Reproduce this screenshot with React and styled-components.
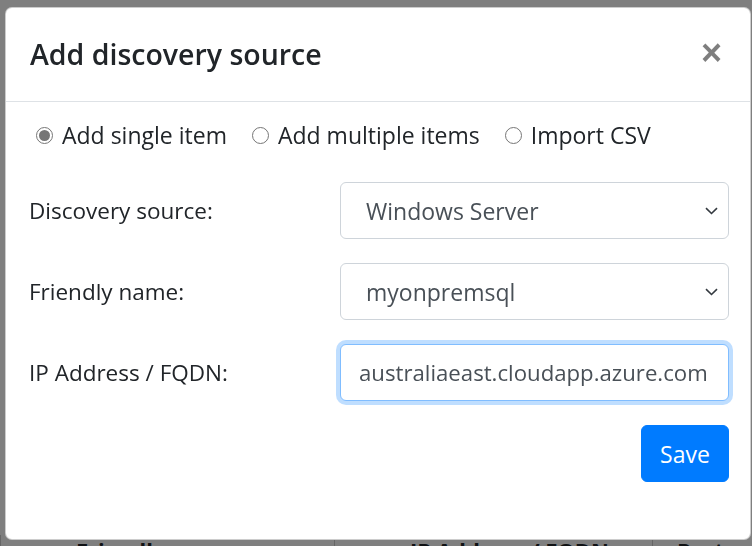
import React, { useState } from 'react';
import styled, { createGlobalStyle } from 'styled-components';

const GlobalStyle = createGlobalStyle`
  html, body {
    margin: 0;
    padding: 0;
    width: 752px;
    height: 546px;
    overflow: hidden;
  }
  body {
    font-family: 'Open Sans', 'Noto Sans', sans-serif;
    color: #212529;
    background: #fff;
  }
`;

export default function App() {
  const [mode, setMode] = useState('single');
  const [source, setSource] = useState('Windows Server');
  const [name, setName] = useState('myonpremsql');
  const [address, setAddress] = useState('australiaeast.cloudapp.azure.com');

  return (
    <Page>
      <GlobalStyle />
      <BgTable>
        <BgCell $w={334}>Friendly name</BgCell>
        <BgCell $w={318}>IP Address / FQDN</BgCell>
        <BgCell $w={100}>Port</BgCell>
      </BgTable>

      <Backdrop>
        <Modal>
          <Header>
            <Title>Add discovery source</Title>
            <CloseButton type='button' aria-label='Close'>
              ×
            </CloseButton>
          </Header>

          <Body>
            <RadioRow>
              <RadioOption>
                <Radio
                  type='radio'
                  name='mode'
                  checked={mode === 'single'}
                  onChange={() => setMode('single')}
                />
                Add single item
              </RadioOption>
              <RadioOption>
                <Radio
                  type='radio'
                  name='mode'
                  checked={mode === 'multiple'}
                  onChange={() => setMode('multiple')}
                />
                Add multiple items
              </RadioOption>
              <RadioOption>
                <Radio
                  type='radio'
                  name='mode'
                  checked={mode === 'csv'}
                  onChange={() => setMode('csv')}
                />
                Import CSV
              </RadioOption>
            </RadioRow>

            <Form>
              <FormRow>
                <Label>Discovery source:</Label>
                <SelectWrap>
                  <Select value={source} onChange={(e) => setSource(e.target.value)}>
                    <option>Windows Server</option>
                    <option>Linux Server</option>
                    <option>SQL Server</option>
                  </Select>
                  <Chevron />
                </SelectWrap>
              </FormRow>
              <FormRow>
                <Label>Friendly name:</Label>
                <SelectWrap>
                  <Select value={name} onChange={(e) => setName(e.target.value)}>
                    <option>myonpremsql</option>
                    <option>myonpremweb</option>
                  </Select>
                  <Chevron />
                </SelectWrap>
              </FormRow>
              <FormRow>
                <Label>IP Address / FQDN:</Label>
                <Input
                  $focused
                  value={address}
                  onChange={(e) => setAddress(e.target.value)}
                />
              </FormRow>
            </Form>

            <Footer>
              <SaveButton type='button'>Save</SaveButton>
            </Footer>
          </Body>
        </Modal>
      </Backdrop>
    </Page>
  );
}

function Chevron() {
  return (
    <ChevronIcon width='13' height='8' viewBox='0 0 13 8'>
      <path d='M1 1.2 L6.5 6.5 L12 1.2' fill='none' stroke='#343a40' strokeWidth='1.6' />
    </ChevronIcon>
  );
}

const Page = styled.div`
  position: relative;
  width: 752px;
  height: 546px;
  overflow: hidden;
  background: #fff;
`;

const BgTable = styled.div`
  display: flex;
  padding: 535px 0 0 0;
`;

const BgCell = styled.div`
  width: ${(p) => p.$w}px;
  box-sizing: border-box;
  padding-left: 75px;
  border-left: 1px solid #ccc;
  font-family: 'Open Sans', sans-serif;
  font-weight: 700;
  font-size: 22px;
  line-height: 30px;
  white-space: nowrap;
  color: #212529;
  &:last-child {
    padding-left: 24px;
  }
`;

const Backdrop = styled.div`
  position: fixed;
  inset: 0;
  background: rgba(0, 0, 0, 0.5);
  padding: 7px 0 0 5px;
`;

const Modal = styled.div`
  width: 746px;
  height: 533px;
  box-sizing: border-box;
  background: #fff;
  border: 1px solid rgba(0, 0, 0, 0.2);
  border-radius: 7px;
  display: flex;
  flex-direction: column;
`;

const Header = styled.div`
  height: 93px;
  flex: none;
  display: flex;
  align-items: center;
  justify-content: space-between;
  padding: 0 24px 0 24px;
  border-bottom: 1px solid #dee2e6;
`;

const Title = styled.h5`
  margin: 0;
  font-size: 28.5px;
  font-weight: 600;
  line-height: 45px;
  color: #212529;
`;

const CloseButton = styled.button`
  border: none;
  background: transparent;
  padding: 0;
  margin: 0 4px 4px 0;
  font-family: 'Liberation Sans', Arial, sans-serif;
  font-size: 36px;
  font-weight: 700;
  line-height: 1;
  color: #000;
  opacity: 0.5;
  cursor: pointer;
`;

const Body = styled.div`
  padding: 14px 21px 0 23px;
  display: flex;
  flex-direction: column;
`;

const RadioRow = styled.div`
  display: flex;
  align-items: center;
  gap: 25px;
  padding-left: 7px;
  height: 38px;
`;

const RadioOption = styled.label`
  display: flex;
  align-items: center;
  gap: 9px;
  font-size: 23px;
  line-height: 38px;
  color: #212529;
  cursor: pointer;
`;

const Radio = styled.input`
  appearance: none;
  margin: 0;
  width: 17px;
  height: 17px;
  border-radius: 50%;
  border: 1px solid #767676;
  background: #fff;
  box-sizing: border-box;
  display: grid;
  place-items: center;
  &:checked::after {
    content: '';
    width: 11px;
    height: 11px;
    border-radius: 50%;
    background: #767676;
  }
`;

const Form = styled.div`
  margin-top: 28px;
  display: flex;
  flex-direction: column;
  gap: 24px;
`;

const FormRow = styled.div`
  display: grid;
  grid-template-columns: 1fr 389px;
  align-items: center;
`;

const Label = styled.label`
  font-size: 22.5px;
  line-height: 36px;
  color: #212529;
`;

const SelectWrap = styled.div`
  position: relative;
`;

const Select = styled.select`
  appearance: none;
  width: 100%;
  height: 57px;
  box-sizing: border-box;
  padding: 0 40px 0 25px;
  border: 1px solid #ced4da;
  border-radius: 6px;
  background: #fff;
  font-family: 'Open Sans', sans-serif;
  font-size: 23px;
  color: #495057;
  outline: none;
`;

const ChevronIcon = styled.svg`
  position: absolute;
  right: 11px;
  top: 25px;
  pointer-events: none;
`;

const Input = styled.input`
  width: 100%;
  height: 57px;
  box-sizing: border-box;
  padding: 0 8px 0 18px;
  border: 1px solid ${(p) => (p.$focused ? '#80bdff' : '#ced4da')};
  border-radius: 6px;
  box-shadow: ${(p) => (p.$focused ? '0 0 0 4px rgba(0, 123, 255, 0.25)' : 'none')};
  font-family: 'Open Sans', sans-serif;
  font-size: 22.2px;
  color: #495057;
  outline: none;
`;

const Footer = styled.div`
  display: flex;
  justify-content: flex-end;
  margin-top: 24px;
`;

const SaveButton = styled.button`
  width: 88px;
  height: 57px;
  border: 1px solid #007bff;
  border-radius: 6px;
  background: #007bff;
  color: #fff;
  font-family: 'Open Sans', sans-serif;
  font-size: 23px;
  cursor: pointer;
`;
